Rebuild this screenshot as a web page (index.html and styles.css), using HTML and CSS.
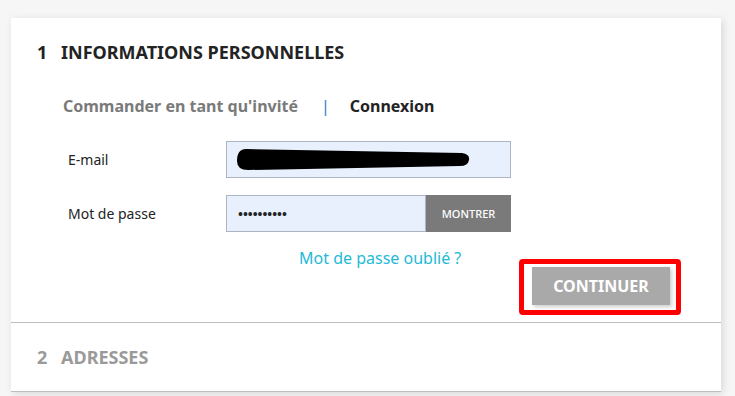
FILE: index.html
```html
<!DOCTYPE html>
<html lang="fr">

<head>
    <meta charset="UTF-8">
    <meta name="viewport" content="width=device-width, initial-scale=1.0">
    <title>Commande</title>
    <link rel="stylesheet" href="styles.css">
</head>

<body>
    <div class="checkout">
        <section class="step current">
            <h1 class="step-title"><span class="step-number">1</span>Informations personnelles</h1>

            <ul class="nav-tabs">
                <li class="tab">Commander en tant qu'invité</li>
                <li class="tab-sep">|</li>
                <li class="tab active">Connexion</li>
            </ul>

            <div class="form-row">
                <label class="form-label">E-mail</label>
                <div class="field">
                    <!-- redacted address -->
                    <svg class="scribble" width="236" height="24" viewBox="0 0 236 24">
                        <path d="M10 1 L226 5 Q234 6 233 12 Q232 18 224 18 L12 22 Q1 22 1 13 Q1 1 10 1 Z" fill="#000"/>
                    </svg>
                </div>
            </div>

            <div class="form-row">
                <label class="form-label">Mot de passe</label>
                <div class="field field-short">
                    <span class="dots">••••••••••</span>
                </div>
                <button class="show-btn">MONTRER</button>
            </div>

            <div class="forgot">
                <a href="#">Mot de passe oublié ?</a>
            </div>

            <div class="step-footer">
                <div class="highlight">
                    <button class="continue-btn">CONTINUER</button>
                </div>
            </div>
        </section>

        <section class="step">
            <h1 class="step-title muted"><span class="step-number">2</span>Adresses</h1>
        </section>
    </div>
</body>

</html>
```

FILE: styles.css
```css
body {
    font-family: "Noto Sans", "Open Sans", Arial, sans-serif;
    margin: 0;
    padding: 18px 14px 0 11px;
    background-color: #f6f6f6;
    color: #232323;
    height: 396px;
    box-sizing: border-box;
    overflow: hidden;
}

.checkout {
    width: 710px;
    background: #fff;
    box-shadow: 2px 2px 8px rgba(0, 0, 0, 0.12);
}

.step {
    border-bottom: 1px solid #bdbdbd;
}

.step.current {
    padding: 22px 0 7px 0;
}

.step-title {
    margin: 0;
    padding-left: 26px;
    font-size: 18px;
    line-height: 24px;
    font-weight: bold;
    text-transform: uppercase;
    color: #232323;
}

.step-number {
    display: inline-block;
    width: 24px;
}

.step-title.muted {
    color: #9a9a9a;
    line-height: 68px;
}

.nav-tabs {
    list-style: none;
    margin: 31px 0 0 52px;
    padding: 0;
    display: flex;
    align-items: center;
    font-size: 16px;
    line-height: 22px;
    font-weight: bold;
}

.tab {
    color: #7a7a7a;
}

.tab-sep {
    color: #2b7cc1;
    font-weight: normal;
    margin: 0 20px 0 23px;
}

.tab.active {
    color: #232323;
}

.form-row {
    display: flex;
    align-items: center;
    margin-top: 24px;
    margin-left: 57px;
}

.form-row + .form-row {
    margin-top: 17px;
}

.form-label {
    width: 158px;
    font-size: 14px;
    color: #232323;
}

.field {
    width: 285px;
    height: 37px;
    box-sizing: border-box;
    border: 1px solid #aeb5c2;
    background-color: #e8f0fe;
    display: flex;
    align-items: center;
    padding-left: 9px;
}

.field-short {
    width: 200px;
    padding-left: 11px;
}

.scribble {
    display: block;
}

.dots {
    font-size: 13px;
    font-weight: bold;
    letter-spacing: 0;
    color: #232323;
}

.show-btn {
    width: 85px;
    height: 37px;
    border: none;
    background-color: #7a7a7a;
    color: #fff;
    font-family: "Noto Sans", Arial, sans-serif;
    font-size: 11px;
    font-weight: 500;
    padding: 0;
}

.forgot {
    margin: 15px 0 0 288px;
    font-size: 16px;
    line-height: 22px;
}

.forgot a {
    color: #24b9d7;
    text-decoration: none;
}

.step-footer {
    display: flex;
    justify-content: flex-end;
    margin-top: -10px;
    padding-right: 40px;
}

.highlight {
    border: 5px solid #ff0000;
    border-radius: 4px;
    padding: 3px 6px 5px 8px;
}

.continue-btn {
    width: 138px;
    height: 38px;
    border: none;
    background-color: #a9a9a9;
    color: #fff;
    font-family: "Noto Sans", Arial, sans-serif;
    font-size: 16px;
    font-weight: bold;
    box-shadow: 2px 2px 4px rgba(0, 0, 0, 0.2);
    padding: 0;
}
```
